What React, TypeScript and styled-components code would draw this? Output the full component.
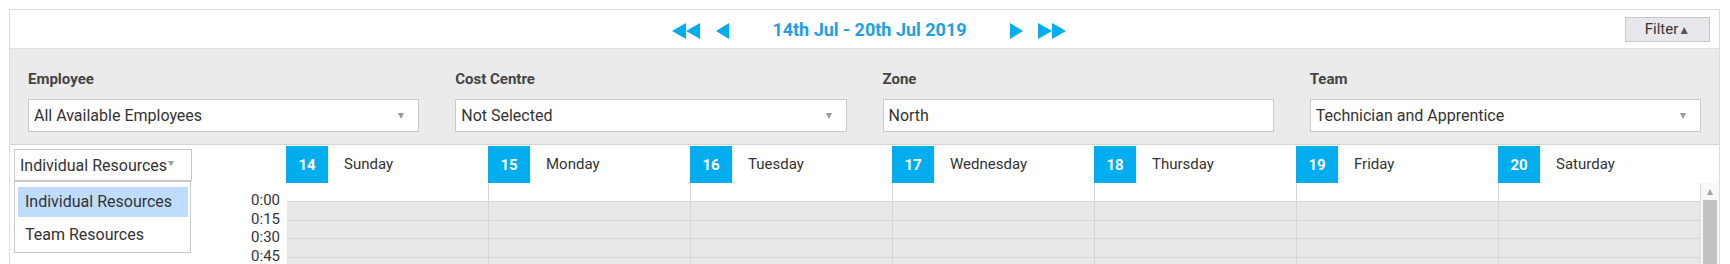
import React from 'react'
import styled, { createGlobalStyle } from 'styled-components'

const GlobalStyle = createGlobalStyle`
    * {
        box-sizing: border-box;
    }

    html, body {
        margin: 0;
        padding: 0;
        overflow: hidden;
        background: #fff;
    }

    body {
        padding: 9px 10px 0 9px;
        font-family: Roboto, "Liberation Sans", Arial, sans-serif;
        color: #333;
    }
`

const Panel = styled.div`
    border: 1px solid #dcdcdc;
    border-bottom: none;
`

const TopBar = styled.div`
    height: 39px;
    display: grid;
    grid-template-columns: 1fr auto 1fr;
    align-items: center;
    border-bottom: 1px solid #e0e0e0;
`

const Nav = styled.div`
    grid-column: 2;
    display: flex;
    align-items: center;
    margin-left: 9px;
`

const NavArrow = styled.svg<{ $gap?: number }>`
    flex: none;
    margin-top: 3px;
    margin-left: ${props => props.$gap || 0}px;
    fill: #00aeef;
`

const DateLabel = styled.span`
    font-size: 18px;
    font-weight: 700;
    color: #1ea0e2;
    margin: 0 43px;
    white-space: nowrap;
`

const FilterButton = styled.button`
    justify-self: end;
    margin-right: 9px;
    width: 85px;
    height: 25px;
    padding: 0;
    border: 1px solid #c8c8c8;
    border-radius: 0;
    background: #e8e8ec;
    font-family: Roboto, "Liberation Sans", Arial, sans-serif;
    font-size: 15px;
    color: #333;

    span {
        font-size: 12px;
        color: #555;
    }
`

const FilterArea = styled.div`
    display: grid;
    grid-template-columns: repeat(4, 1fr);
    column-gap: 36px;
    padding: 21px 18px 12px;
    background: #ebebeb;
    border-bottom: 1px solid #d4d4d4;
`

const FieldLabel = styled.div`
    font-size: 15px;
    font-weight: 700;
    line-height: 18px;
    color: #444;
    margin-bottom: 11px;
`

const SelectBox = styled.div`
    height: 33px;
    display: flex;
    align-items: center;
    justify-content: space-between;
    padding: 0 14px 0 5px;
    border: 1px solid #c9c9c9;
    background: #fff;
    font-size: 16px;
    color: #333;
`

const Caret = styled.span<{ $size?: number }>`
    width: 0;
    height: 0;
    border-left: ${props => (props.$size || 7) / 2}px solid transparent;
    border-right: ${props => (props.$size || 7) / 2}px solid transparent;
    border-top: ${props => (props.$size || 7) - 1}px solid #9a9a9a;
`

const Columns = `
    display: grid;
    grid-template-columns: 276px repeat(7, 1fr) 19px;
`

const DayHeaderRow = styled.div`
    ${Columns}
    height: 38px;
`

const ResourceCell = styled.div`
    position: relative;
    padding: 4px 0 0 4px;
`

const ResourceSelect = styled.div`
    width: 178px;
    height: 32px;
    display: flex;
    align-items: center;
    gap: 1px;
    padding-left: 5px;
    border: 1px solid #c9c9c9;
    font-size: 16px;
    white-space: nowrap;

    ${Caret} {
        margin-top: -3px;
    }
`

const ResourceMenu = styled.div`
    position: absolute;
    z-index: 2;
    top: 36px;
    left: 4px;
    width: 177px;
    padding: 5px 2px 2px 3px;
    border: 1px solid #c9c9c9;
    background: #fff;
`

const MenuItem = styled.div<{ $active?: boolean }>`
    height: 30px;
    line-height: 30px;
    padding-left: 7px;
    font-size: 16px;
    background: ${props => (props.$active ? '#bfdcfd' : 'transparent')};

    & + & {
        margin-top: 3px;
    }
`

const DayHead = styled.div`
    display: flex;
    align-items: flex-start;
`

const DayNumber = styled.div`
    width: 42px;
    height: 37px;
    margin-top: 1px;
    display: flex;
    align-items: center;
    justify-content: center;
    background: #00aeef;
    color: #fff;
    font-size: 15px;
    font-weight: 700;
`

const DayName = styled.div`
    margin-left: 16px;
    line-height: 37px;
    margin-top: 1px;
    font-size: 15px;
    color: #333;
`

const ScheduleBody = styled.div`
    ${Columns}
    height: 81px;
    overflow: hidden;
`

const TimeGutter = styled.div`
    padding: 8px 6px 0 0;
    text-align: right;
`

const TimeLabel = styled.div`
    height: 18.7px;
    line-height: 18.7px;
    font-size: 15px;
    color: #333;
`

const DayColumn = styled.div<{ $first?: boolean }>`
    padding-top: 18px;
    border-left: 1px solid ${props => (props.$first ? 'transparent' : '#d9d4d4')};
`

const Slot = styled.div`
    height: 18.7px;
    background: #e8e8e8;
    border-top: 1px solid #d9d4d4;
`

const ScrollTrack = styled.div`
    display: flex;
    flex-direction: column;
    border-left: 1px solid #dcdcdc;
    background: #f8f8f8;
`

const ScrollUp = styled.div`
    height: 17px;
    display: flex;
    align-items: center;
    justify-content: center;

    ${Caret} {
        transform: rotate(180deg);
        border-top-color: #a3a3a3;
    }
`

const ScrollThumb = styled.div`
    flex: 1;
    margin: 0 2px;
    background: #c1c1c1;
`

const filters = [
    { label: 'Employee', value: 'All Available Employees', caret: true },
    { label: 'Cost Centre', value: 'Not Selected', caret: true },
    { label: 'Zone', value: 'North', caret: false },
    { label: 'Team', value: 'Technician and Apprentice', caret: true },
]

const days = [
    { num: 14, name: 'Sunday' },
    { num: 15, name: 'Monday' },
    { num: 16, name: 'Tuesday' },
    { num: 17, name: 'Wednesday' },
    { num: 18, name: 'Thursday' },
    { num: 19, name: 'Friday' },
    { num: 20, name: 'Saturday' },
]

const times = ['0:00', '0:15', '0:30', '0:45']

const DoubleArrow: React.FC<{ dir: 'left' | 'right', gap?: number }> = ({ dir, gap }) => (
    <NavArrow $gap={gap} width="28" height="16" viewBox="0 0 28 16">
        {dir === 'left'
            ? <><polygon points="0,8 14,0 14,16" /><polygon points="14,8 28,0 28,16" /></>
            : <><polygon points="0,0 14,8 0,16" /><polygon points="14,0 28,8 14,16" /></>}
    </NavArrow>
)

const SingleArrow: React.FC<{ dir: 'left' | 'right', gap?: number }> = ({ dir, gap }) => (
    <NavArrow $gap={gap} width="13" height="16" viewBox="0 0 13 16">
        {dir === 'left'
            ? <polygon points="0,8 13,0 13,16" />
            : <polygon points="0,0 13,8 0,16" />}
    </NavArrow>
)

const App: React.FC = () => {
    return (
        <>
            <GlobalStyle />
            <Panel>
                <TopBar>
                    <Nav>
                        <DoubleArrow dir="left" />
                        <SingleArrow dir="left" gap={16} />
                        <DateLabel>14th Jul - 20th Jul 2019</DateLabel>
                        <SingleArrow dir="right" />
                        <DoubleArrow dir="right" gap={15} />
                    </Nav>
                    <FilterButton>Filter<span>▲</span></FilterButton>
                </TopBar>

                <FilterArea>
                    {filters.map(f => (
                        <div key={f.label}>
                            <FieldLabel>{f.label}</FieldLabel>
                            <SelectBox>
                                {f.value}
                                {f.caret && <Caret />}
                            </SelectBox>
                        </div>
                    ))}
                </FilterArea>

                <DayHeaderRow>
                    <ResourceCell>
                        <ResourceSelect>
                            Individual Resources
                            <Caret $size={6} />
                        </ResourceSelect>
                        <ResourceMenu>
                            <MenuItem $active>Individual Resources</MenuItem>
                            <MenuItem>Team Resources</MenuItem>
                        </ResourceMenu>
                    </ResourceCell>
                    {days.map(d => (
                        <DayHead key={d.num}>
                            <DayNumber>{d.num}</DayNumber>
                            <DayName>{d.name}</DayName>
                        </DayHead>
                    ))}
                    <div />
                </DayHeaderRow>

                <ScheduleBody>
                    <TimeGutter>
                        {times.map(t => <TimeLabel key={t}>{t}</TimeLabel>)}
                    </TimeGutter>
                    {days.map((d, i) => (
                        <DayColumn key={d.num} $first={i === 0}>
                            {[...times, 'next'].map(t => <Slot key={t} />)}
                        </DayColumn>
                    ))}
                    <ScrollTrack>
                        <ScrollUp><Caret $size={7} /></ScrollUp>
                        <ScrollThumb />
                    </ScrollTrack>
                </ScheduleBody>
            </Panel>
        </>
    )
}

export default App
